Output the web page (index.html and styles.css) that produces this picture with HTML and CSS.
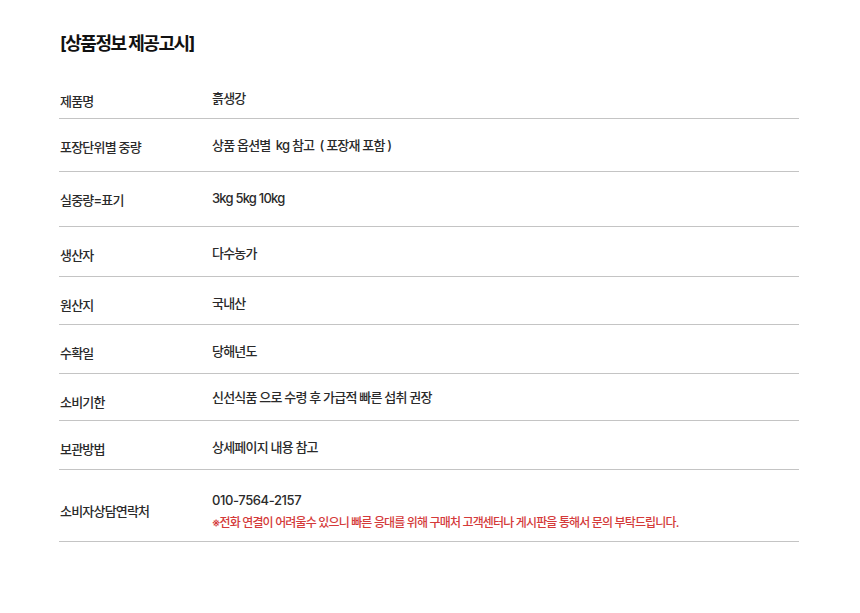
FILE: index.html
```html
<!DOCTYPE html>
<html lang="ko">
<head>
<meta charset="utf-8">
<link rel="stylesheet" href="styles.css">
</head>
<body>
<div class="wrap">
  <h2 class="title">[상품정보 제공고시]</h2>
  <div class="table">
    <div class="row"><div class="label">제품명</div><div class="value">흙생강</div></div>
    <div class="row"><div class="label">포장단위별 중량</div><div class="value">상품 옵션별&nbsp; kg 참고&nbsp; ( 포장재 포함 )</div></div>
    <div class="row"><div class="label">실중량=표기</div><div class="value">3kg 5kg 10kg</div></div>
    <div class="row"><div class="label">생산자</div><div class="value">다수농가</div></div>
    <div class="row"><div class="label">원산지</div><div class="value">국내산</div></div>
    <div class="row"><div class="label">수확일</div><div class="value">당해년도</div></div>
    <div class="row"><div class="label">소비기한</div><div class="value">신선식품 으로 수령 후 가급적 빠른 섭취 권장</div></div>
    <div class="row"><div class="label">보관방법</div><div class="value">상세페이지 내용 참고</div></div>
    <div class="row contact"><div class="label">소비자상담연락처</div><div class="value"><div class="phone">010-7564-2157</div><div class="notice">※전화 연결이 어려울수 있으니 빠른 응대를 위해 구매처 고객센터나 게시판을 통해서 문의 부탁드립니다.</div></div></div>
  </div>
</div>
</body>
</html>
```
FILE: styles.css
```css
html, body { margin: 0; padding: 0; background: #fff; }
body {
  font-family: Inter, "Noto Sans CJK KR", sans-serif;
  color: #2a2a2a;
}
.wrap {
  width: 740px;
  padding: 32px 0 0 59px;
}
.title {
  margin: 0 0 0 1px;
  font-size: 18px;
  line-height: 24px;
  font-weight: 700;
  letter-spacing: -1.5px;
  color: #111;
}
.table { margin-top: 17px; }
.row {
  display: flex;
  align-items: flex-start;
  border-bottom: 1px solid #c4c4c4;
  box-sizing: border-box;
  font-size: 13px;
  line-height: 16px;
  letter-spacing: -0.8px;
  font-weight: 500;
}
.label {
  width: 152px;
  padding: 20px 0 0 1px;
  color: #2a2a2a;
}
.value {
  padding-top: 18px;
  color: #2a2a2a;
}
.row:nth-child(1) { height: 46px; }
.row:nth-child(1) .label { padding-top: 20px; }
.row:nth-child(1) .value { padding-top: 17px; }
.row:nth-child(2) { height: 53px; }
.row:nth-child(3) { height: 55px; }
.row:nth-child(4) { height: 50px; }
.row:nth-child(5) { height: 48px; }
.row:nth-child(6) { height: 49px; }
.row:nth-child(7) { height: 47px; }
.row:nth-child(7) .value { padding-top: 15px; }
.row:nth-child(8) { height: 49px; }
.row.contact { height: 72px; }
.row.contact .label { padding-top: 33px; }
.row.contact .value { padding-top: 21px; }
.phone {
  font-size: 13px;
  line-height: 18px;
  letter-spacing: -0.4px;
}
.notice {
  margin-top: 6px;
  font-size: 12px;
  line-height: 16px;
  letter-spacing: -0.85px;
  color: #d43a3a;
}
```
